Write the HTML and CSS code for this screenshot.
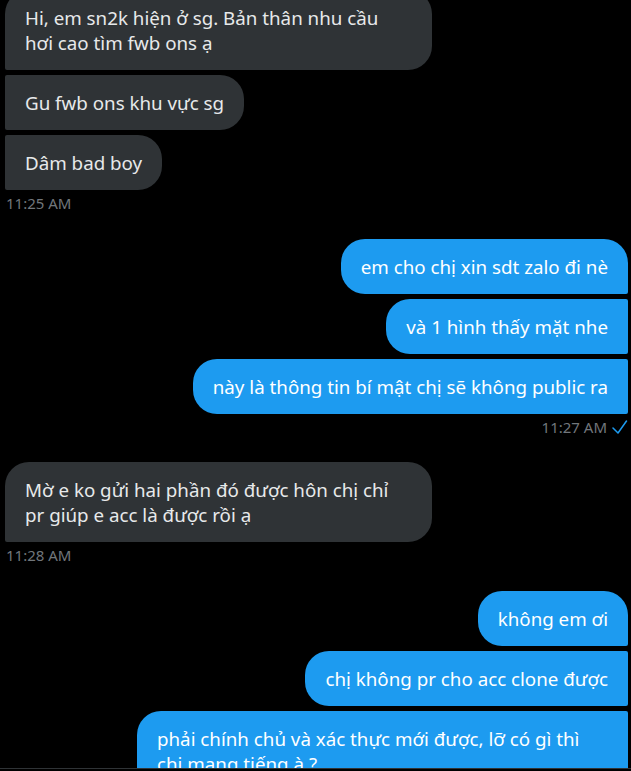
FILE: index.html
```html
<!DOCTYPE html>
<html>
<head>
  <meta charset="UTF-8" />
  <title>Messages</title>
  <link rel="stylesheet" href="styles.css">
</head>
<body>
  <div class="screen">
    <div class="chat">
      <div class="thread">

        <div class="group in">
          <div class="bubble wide">Hi, em sn2k hiện ở sg. Bản thân nhu cầu<br>hơi cao tìm fwb ons ạ</div>
          <div class="bubble next">Gu fwb ons khu vực sg</div>
          <div class="bubble next">Dâm bad boy</div>
          <div class="time">11:25 AM</div>
        </div>

        <div class="group out">
          <div class="bubble">em cho chị xin sdt zalo đi nè</div>
          <div class="bubble next">và 1 hình thấy mặt nhe</div>
          <div class="bubble next">này là thông tin bí mật chị sẽ không public ra</div>
          <div class="time">
            <span>11:27 AM</span>
            <svg class="seen" viewBox="0 0 16 16" width="16" height="16">
              <polyline points="1,9 6,14 14.5,2" />
            </svg>
          </div>
        </div>

        <div class="group in">
          <div class="bubble wide">Mờ e ko gửi hai phần đó được hôn chị chỉ<br>pr giúp e acc là được rồi ạ</div>
          <div class="time">11:28 AM</div>
        </div>

        <div class="group out">
          <div class="bubble">không em ơi</div>
          <div class="bubble next">chị không pr cho acc clone được</div>
          <div class="bubble next wide">phải chính chủ và xác thực mới được, lỡ có gì thì<br>chị mang tiếng à ?</div>
        </div>

      </div>
    </div>
    <div class="composer"></div>
  </div>
</body>
</html>
```
FILE: styles.css
```css
html, body {
  margin: 0;
  background: #000;
}

.screen {
  height: 771px;
  display: flex;
  flex-direction: column;
}

.chat {
  flex: 1;
  overflow: hidden;
}

.thread {
  margin-top: -10px;
  padding: 0 3px 0 5px;
  font-family: "Noto Sans", "Liberation Sans", sans-serif;
}

.composer {
  height: 2px;
  flex-shrink: 0;
  border-top: 1px solid #2f3336;
}

/* groups */
.group {
  display: flex;
  flex-direction: column;
  gap: 5px;
  margin-bottom: 25.5px;
}
.group.in {
  align-items: flex-start;
}
.group.out {
  align-items: flex-end;
}

/* bubbles */
.bubble {
  box-sizing: border-box;
  padding: 15px 20px;
  font-size: 18.75px;
  line-height: 25px;
  border-radius: 24px;
  white-space: nowrap;
}
.in .bubble {
  background: #2f3336;
  color: #e7e9ea;
  border-bottom-left-radius: 2px;
}
.in .bubble.next {
  border-top-left-radius: 2px;
}
.in .bubble.wide {
  width: 427px;
}
.out .bubble {
  background: #1d9bf0;
  color: #fff;
  border-bottom-right-radius: 2px;
}
.out .bubble.next {
  border-top-right-radius: 2px;
}
.out .bubble.wide {
  width: 491px;
}

/* timestamps */
.time {
  display: flex;
  align-items: center;
  gap: 5px;
  margin-top: -5px;
  padding-top: 3px;
  font-size: 15px;
  line-height: 20px;
  color: #71767b;
  padding-left: 1px;
}
.out .time {
  padding-left: 0;
}
.seen {
  display: block;
  fill: none;
  stroke: #1d9bf0;
  stroke-width: 1.5;
  stroke-linecap: round;
  stroke-linejoin: round;
}
```
